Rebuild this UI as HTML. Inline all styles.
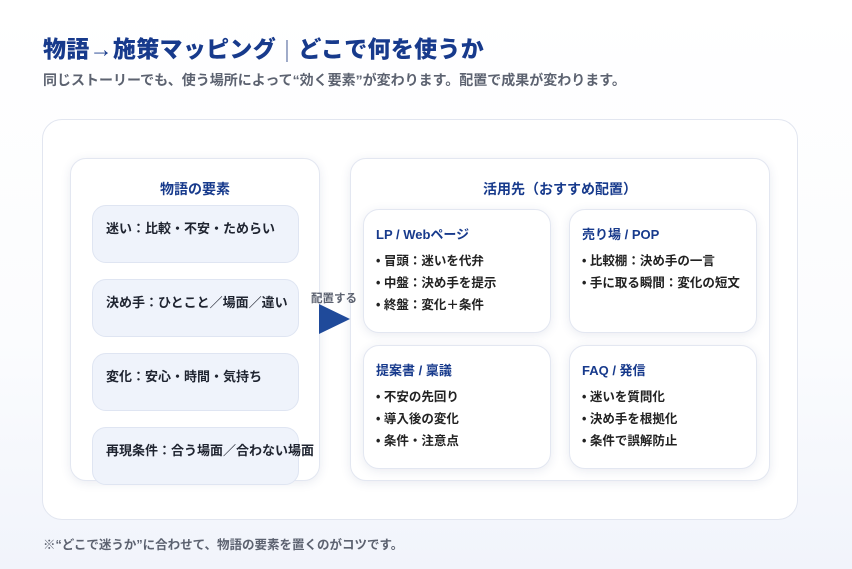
<!DOCTYPE html>
<html><head><meta charset="utf-8"><style>
*{margin:0;padding:0;box-sizing:border-box}
body{width:852px;height:569px;overflow:hidden;background:linear-gradient(180deg,#fff 0%,#fbfcfe 60%,#f1f4fb 100%);font-family:"Liberation Sans","Noto Sans CJK JP",sans-serif;position:relative;color:#1f2430}
.a{position:absolute}
h1{position:absolute;left:43px;top:30px;font-size:23px;font-weight:900;color:#173a8c;letter-spacing:0.3px;white-space:nowrap}
.sub{left:43px;top:70px;font-size:14px;color:#5c6270;font-weight:700;white-space:nowrap}
.panel{left:42px;top:119px;width:756px;height:401px;border:1px solid #e2e6f0;border-radius:20px;background:#fff}
.card{background:#fff;border:1px solid #e3e7f1;border-radius:16px;box-shadow:0 2px 10px rgba(40,60,120,.10)}
.ct{font-size:14px;font-weight:700;color:#173a8c;text-align:center;white-space:nowrap}
.item{left:92px;width:207px;height:58px;background:#eff3fb;border:1px solid #dfe5f2;border-radius:14px;font-size:13px;font-weight:700;padding:12px 0 0 13px;white-space:nowrap}
.sc{width:188px;height:124px;padding:14px 12px}
.sc h3{font-size:13px;color:#173a8c;font-weight:700;margin-bottom:7px;white-space:nowrap}
.sc p{font-size:12.5px;font-weight:700;line-height:22px;white-space:nowrap;color:#222}
</style></head><body>
<h1>物語<span style="font-weight:900">→</span>施策マッピング<span style="color:#9aa6c6;font-weight:400;margin:0 8px">|</span>どこで何を使うか</h1>
<div class="a sub">同じストーリーでも、使う場所によって“効く要素”が変わります。配置で成果が変わります。</div>
<div class="a panel"></div>
<div class="a card" style="left:70px;top:158px;width:250px;height:323px"></div>
<div class="a ct" style="left:70px;top:179px;width:250px">物語の要素</div>
<div class="a item" style="top:205px">迷い：比較・不安・ためらい</div>
<div class="a item" style="top:279px">決め手：ひとこと／場面／違い</div>
<div class="a item" style="top:353px">変化：安心・時間・気持ち</div>
<div class="a card" style="left:350px;top:158px;width:420px;height:323px"></div>
<div class="a item" style="top:427px">再現条件：合う場面／合わない場面</div>
<div class="a" style="left:311px;top:290px;font-size:11.5px;font-weight:700;color:#5c6270;white-space:nowrap;z-index:5">配置する</div>
<svg class="a" style="left:319px;top:304px;z-index:5" width="32" height="30"><polygon points="0,0 31,15 0,30" fill="#1f4a9a"/></svg>
<div class="a ct" style="left:350px;top:179px;width:420px">活用先（おすすめ配置）</div>
<div class="a card sc" style="left:363px;top:209px"><h3>LP / Webページ</h3><p>• 冒頭：迷いを代弁</p><p>• 中盤：決め手を提示</p><p>• 終盤：変化＋条件</p></div>
<div class="a card sc" style="left:569px;top:209px"><h3>売り場 / POP</h3><p>• 比較棚：決め手の一言</p><p>• 手に取る瞬間：変化の短文</p></div>
<div class="a card sc" style="left:363px;top:345px"><h3>提案書 / 稟議</h3><p>• 不安の先回り</p><p>• 導入後の変化</p><p>• 条件・注意点</p></div>
<div class="a card sc" style="left:569px;top:345px"><h3>FAQ / 発信</h3><p>• 迷いを質問化</p><p>• 決め手を根拠化</p><p>• 条件で誤解防止</p></div>
<div class="a" style="left:43px;top:534px;font-size:12.5px;font-weight:700;color:#5c6270;white-space:nowrap">※“どこで迷うか”に合わせて、物語の要素を置くのがコツです。</div>
</body></html>
